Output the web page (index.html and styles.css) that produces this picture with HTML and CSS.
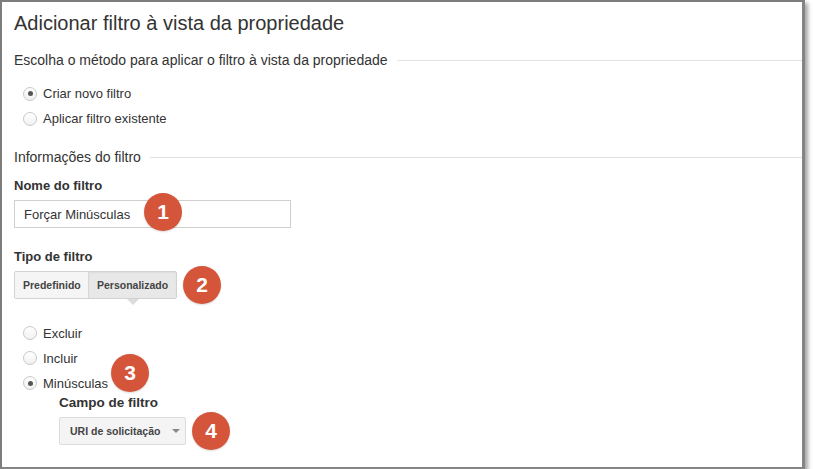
FILE: index.html
```html
<!DOCTYPE html>
<html lang="pt">
<head>
    <meta charset="UTF-8">
    <title>Adicionar filtro à vista da propriedade</title>
    <link rel="stylesheet" href="styles.css">
</head>
<body>
    <div class="panel">
        <h1 class="title">Adicionar filtro à vista da propriedade</h1>

        <div class="legend legend-method">Escolha o método para aplicar o filtro à vista da propriedade</div>
        <div class="radios radios-method">
            <label class="radio"><span class="dot checked"></span>Criar novo filtro</label>
            <label class="radio"><span class="dot"></span>Aplicar filtro existente</label>
        </div>

        <div class="legend legend-info">Informações do filtro</div>

        <div class="field-label label-name">Nome do filtro</div>
        <div class="field-row">
            <input class="text-input" type="text" value="Forçar Minúsculas">
            <span class="badge badge-1">1</span>
        </div>

        <div class="field-label label-type">Tipo de filtro</div>
        <div class="field-row">
            <div class="btn-group">
                <button class="seg">Predefinido</button>
                <button class="seg active">Personalizado</button>
            </div>
            <span class="badge badge-2">2</span>
        </div>

        <div class="radios radios-type">
            <label class="radio"><span class="dot"></span>Excluir</label>
            <label class="radio"><span class="dot"></span>Incluir</label>
            <label class="radio radio-last"><span class="dot checked"></span>Minúsculas<span class="badge badge-3">3</span></label>
        </div>

        <div class="sub">
            <div class="field-label label-campo">Campo de filtro</div>
            <div class="field-row">
                <div class="dropdown">URI de solicitação<span class="caret"></span></div>
                <span class="badge badge-4">4</span>
            </div>
        </div>
    </div>
</body>
</html>
```

FILE: styles.css
```css
/* Painel "Adicionar filtro" */
body {
    margin: 0;
    background: #fff;
    font-family: "Liberation Sans", Arial, sans-serif;
    color: #333;
}

.panel {
    width: 788px;
    height: 456px;
    padding: 9px 0 0 12px;
    background: #fff;
    border-left: 2px solid #7d7d7d;
    border-top: 2px solid #7d7d7d;
    border-right: 3px solid #858585;
    border-bottom: 3px solid #858585;
    box-shadow: 3px 3px 4px rgba(0,0,0,0.35);
}

.title {
    margin: 0;
    font-size: 20px;
    font-weight: normal;
    line-height: 24px;
    color: #333;
}

.legend {
    display: flex;
    align-items: center;
    font-size: 14px;
    line-height: 20px;
    color: #333;
}
.legend::after {
    content: "";
    flex: 1;
    height: 1px;
    margin-left: 9px;
    background: #e2e2e2;
}
.legend-method { margin-top: 15px; }
.legend-info { margin-top: 16px; }

.radios {
    display: flex;
    flex-direction: column;
    padding-left: 9px;
}
.radios-method { margin-top: 11px; }
.radios-method .radio { height: 25px; }
.radios-type { margin-top: 24px; gap: 5px; }
.radios-type .radio { height: 20px; }

.radio {
    position: relative;
    display: flex;
    align-items: center;
    gap: 6px;
    font-size: 13px;
    color: #333;
}

.dot {
    width: 12px;
    height: 12px;
    border: 1px solid #c8c8c8;
    border-radius: 50%;
    background: linear-gradient(#fff, #f1f1f1);
    display: flex;
    align-items: center;
    justify-content: center;
}
.dot.checked::after {
    content: "";
    width: 5px;
    height: 5px;
    border-radius: 50%;
    background: #555;
}

.field-label {
    font-size: 13px;
    font-weight: bold;
    line-height: 18px;
    color: #333;
}
.label-name { margin-top: 10px; }
.label-type { margin-top: 20px; }
.label-campo { font-size: 13.5px; margin-top: 1px; }

.field-row {
    position: relative;
    display: flex;
    margin-top: 5px;
}

.text-input {
    box-sizing: border-box;
    width: 277px;
    height: 28px;
    margin: 0;
    padding: 0 9px;
    border: 1px solid #cfcfcf;
    font-family: inherit;
    font-size: 13px;
    color: #333;
    outline: none;
}

.btn-group {
    display: flex;
    height: 28px;
    border: 1px solid #d2d2d2;
    border-radius: 2px;
    box-sizing: border-box;
}
.seg {
    position: relative;
    margin: 0;
    border: none;
    padding: 0 8px;
    font-family: inherit;
    font-size: 10.5px;
    font-weight: bold;
    color: #444;
    background: #f5f5f5;
}
.seg:first-child { width: 74px; border-right: 1px solid #d7d7d7; }
.seg.active {
    width: 87px;
    background: #e8e8e8;
    box-shadow: inset 0 1px 2px rgba(0,0,0,0.06);
}
.seg.active::after {
    content: "";
    position: absolute;
    left: 38px;
    top: 27px;
    border-left: 6px solid transparent;
    border-right: 6px solid transparent;
    border-top: 6px solid #dcdcdc;
}

.sub { padding-left: 45px; }

.dropdown {
    box-sizing: border-box;
    width: 127px;
    height: 28px;
    display: flex;
    align-items: center;
    padding-left: 10px;
    border: 1px solid #dcdcdc;
    border-radius: 2px;
    background: #f4f4f4;
    font-size: 10.5px;
    font-weight: bold;
    color: #444;
}
.caret {
    margin-left: 12px;
    border-left: 4px solid transparent;
    border-right: 4px solid transparent;
    border-top: 4px solid #888;
}

.badge {
    position: absolute;
    width: 38px;
    height: 38px;
    border-radius: 50%;
    background: #d4553a;
    color: #fff;
    font-size: 21px;
    font-weight: bold;
    line-height: 38px;
    text-align: center;
    box-shadow: 0 1px 2px rgba(0,0,0,0.15);
}
.badge-1 { left: 130px; top: -7px; }
.badge-2 { left: 169px; top: -5px; }
.badge-3 { left: 88px; top: -19px; }
.badge-4 { left: 133px; top: -5px; }
```
